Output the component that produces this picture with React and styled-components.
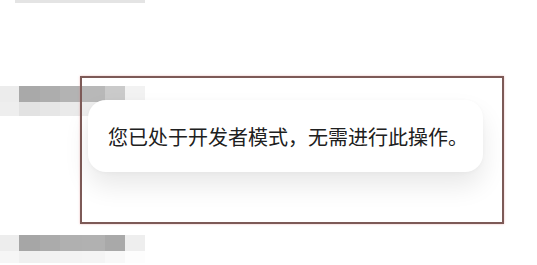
import React from 'react';
import styled, { createGlobalStyle } from 'styled-components';

const GlobalStyle = createGlobalStyle`
    html, body {
        margin: 0;
        padding: 0;
        background: #fff;
    }
    body {
        font-family: "Noto Sans CJK SC", "Noto Sans", sans-serif;
    }
`;

const Pagina = styled.div`
    position: relative;
    width: 537px;
    height: 265px;
    overflow: hidden;
    background: #fff;
`;

const Lista = styled.div`
    display: flex;
    flex-direction: column;
`;

const LinhaTopo = styled.div`
    margin-left: 15px;
    width: 130px;
    height: 3px;
    background: #e4e4e4;
`;

const Vazio = styled.div`
    height: ${p => p.$altura}px;
`;

const Mosaico = styled.div`
    display: flex;
    height: ${p => p.$altura}px;
`;

const Celula = styled.div`
    width: ${p => p.$largura}px;
    background: ${p => p.$cor};
`;

const Moldura = styled.div`
    position: absolute;
    left: 80px;
    top: 76px;
    width: 424px;
    height: 148px;
    border: 2px solid #7d5a57;
    box-shadow: 0 0 2px rgba(220, 120, 120, 0.5);
    padding: 22px 0 0 6px;
    box-sizing: border-box;
`;

const Toast = styled.div`
    width: 395px;
    height: 72px;
    border-radius: 18px;
    background: #fff;
    box-shadow: 0 14px 26px rgba(0, 0, 0, 0.09), 0 1px 4px rgba(0, 0, 0, 0.03);
    display: flex;
    align-items: center;
    padding-left: 20px;
    box-sizing: border-box;
`;

const Mensagem = styled.p`
    margin: 0;
    font-size: 20px;
    color: #202020;
    white-space: nowrap;
`;

const linhas1 = [
    { l: 19, c: '#ececec' }, { l: 21, c: '#a9a9a9' }, { l: 20, c: '#adadad' },
    { l: 22, c: '#b3b3b3' }, { l: 23, c: '#b8b8b8' }, { l: 20, c: '#cacaca' },
    { l: 20, c: '#f2f2f2' }
];
const linhas2 = [
    { l: 19, c: '#eeeeee' }, { l: 21, c: '#e2e2e2' }, { l: 20, c: '#e6e6e6' },
    { l: 22, c: '#eaeaea' }, { l: 23, c: '#ededed' }, { l: 20, c: '#f4f4f4' },
    { l: 20, c: '#fbfbfb' }
];
const linhas3 = [
    { l: 19, c: '#ededed' }, { l: 21, c: '#a6a6a6' }, { l: 20, c: '#ababab' },
    { l: 22, c: '#b0b0b0' }, { l: 23, c: '#b1b1b1' }, { l: 20, c: '#a9a9a9' },
    { l: 20, c: '#eeeeee' }
];
const linhas4 = [
    { l: 19, c: '#f6f6f6' }, { l: 21, c: '#f0f0f0' }, { l: 20, c: '#f2f2f2' },
    { l: 22, c: '#f3f3f3' }, { l: 23, c: '#f4f4f4' }, { l: 20, c: '#f8f8f8' },
    { l: 20, c: '#fdfdfd' }
];

function Faixa({ celulas, altura }) {
    return (
        <Mosaico $altura={altura}>
            {celulas.map((c, i) => <Celula key={i} $largura={c.l} $cor={c.c} />)}
        </Mosaico>
    );
}

function App() {
    return (
        <>
            <GlobalStyle />
            <Pagina>
                <Lista>
                    <LinhaTopo />
                    <Vazio $altura={83} />
                    <Faixa celulas={linhas1} altura={16} />
                    <Faixa celulas={linhas2} altura={14} />
                    <Vazio $altura={119} />
                    <Faixa celulas={linhas3} altura={16} />
                    <Faixa celulas={linhas4} altura={12} />
                </Lista>
                <Moldura>
                    <Toast>
                        <Mensagem>您已处于开发者模式，无需进行此操作。</Mensagem>
                    </Toast>
                </Moldura>
            </Pagina>
        </>
    );
}

export default App;
